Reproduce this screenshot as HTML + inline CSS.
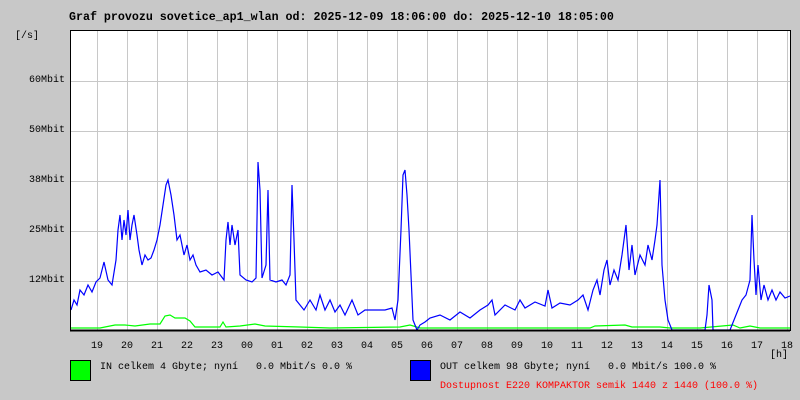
<!DOCTYPE html><html><head><style>
body{margin:0;width:800px;height:400px;background:#c8c8c8;font-family:"Liberation Mono",monospace;font-size:10px;color:#000;position:relative;overflow:hidden}
.t{position:absolute;white-space:pre}
.h{position:absolute;top:341px;width:20px;margin-left:-10px;text-align:center;font-size:10px}
</style></head><body>
<svg width="800" height="400" style="position:absolute;left:0;top:0">
<rect x="70" y="30" width="720" height="300" fill="#fff"/>
<g stroke="#c8c8c8" stroke-width="1">
<path d="M97.5 30V330M127.5 30V330M157.5 30V330M187.5 30V330M217.5 30V330M247.5 30V330M277.5 30V330M307.5 30V330M337.5 30V330M367.5 30V330M397.5 30V330M427.5 30V330M457.5 30V330M487.5 30V330M517.5 30V330M547.5 30V330M577.5 30V330M607.5 30V330M637.5 30V330M667.5 30V330M697.5 30V330M727.5 30V330M757.5 30V330M787.5 30V330"/>
<path d="M60 81.5H790M60 131.5H790M60 181.5H790M60 231.5H790M60 281.5H790"/>
</g>
<polyline fill="none" stroke="#00ff00" stroke-width="1.2" points="71,328 100,328 115,325 125,325 135,326 150,324 160,324 165,316 170,315 175,318 185,318 190,321 195,327 220,327 223,322 226,327 240,326 255,324 265,326 300,327 330,328 400,327 410,325 420,328 590,328 595,326 625,325 632,327 660,327 670,328 700,328 733,325 740,328 750,326 760,328 790,328"/>
<polyline fill="none" stroke="#0000ff" stroke-width="1.2" points="71,310 74,300 77,305 80,290 84,295 88,285 92,292 96,282 100,278 104,262 108,280 112,285 116,260 118,230 120,215 122,240 124,220 126,235 128,210 130,240 132,225 134,215 137,235 139,250 142,265 145,255 148,260 151,258 154,250 157,240 160,225 163,205 166,185 168,180 171,195 174,215 177,240 180,235 184,255 187,245 190,260 193,255 196,265 200,272 206,270 212,275 218,272 224,280 226,240 228,222 230,245 232,225 235,245 238,230 240,275 246,280 252,282 256,278 258,162 260,190 262,278 266,265 268,190 270,280 276,282 282,280 286,285 290,275 292,185 294,240 296,300 300,305 304,310 310,300 316,310 320,295 325,310 330,300 335,312 340,305 345,315 352,300 358,315 365,310 375,310 385,310 392,308 395,320 398,300 401,230 403,175 405,170 407,195 409,230 411,275 413,320 417,330 420,325 425,322 430,318 440,315 450,320 460,312 470,318 480,310 488,305 492,300 495,315 505,305 515,310 520,300 525,308 535,302 545,306 548,290 552,308 560,303 570,305 578,300 583,295 588,310 593,290 597,280 600,295 604,270 607,260 610,285 614,270 618,280 622,255 626,225 629,270 632,245 635,275 640,255 645,265 648,245 652,260 655,240 657,225 660,180 662,265 665,300 668,320 672,330 676,330 705,330 707,315 709,285 712,300 713,330 730,330 734,320 738,310 742,300 746,295 750,280 752,215 754,260 756,295 758,265 761,300 764,285 768,300 772,290 776,300 780,292 785,298 790,296"/>
<rect x="70.5" y="30.5" width="720" height="300" fill="none" stroke="#000" stroke-width="1"/>
<line x1="70" y1="330.5" x2="790" y2="330.5" stroke="#000" stroke-width="2"/>
<rect x="70.5" y="360.5" width="20" height="20" fill="#00ff00" stroke="#000"/>
<rect x="410.5" y="360.5" width="20" height="20" fill="#0000ff" stroke="#000"/>
</svg>
<div class="t" style="left:69px;top:11px;font-weight:bold;font-size:11.65px">Graf provozu sovetice_ap1_wlan od: 2025-12-09 18:06:00 do: 2025-12-10 18:05:00</div>
<div class="t" style="left:15px;top:31px">[/s]</div>
<div class="t" style="left:29px;top:75px">60Mbit</div>
<div class="t" style="left:29px;top:125px">50Mbit</div>
<div class="t" style="left:29px;top:175px">38Mbit</div>
<div class="t" style="left:29px;top:225px">25Mbit</div>
<div class="t" style="left:29px;top:275px">12Mbit</div>
<div class="h" style="left:97px">19</div><div class="h" style="left:127px">20</div><div class="h" style="left:157px">21</div><div class="h" style="left:187px">22</div><div class="h" style="left:217px">23</div><div class="h" style="left:247px">00</div><div class="h" style="left:277px">01</div><div class="h" style="left:307px">02</div><div class="h" style="left:337px">03</div><div class="h" style="left:367px">04</div><div class="h" style="left:397px">05</div><div class="h" style="left:427px">06</div><div class="h" style="left:457px">07</div><div class="h" style="left:487px">08</div><div class="h" style="left:517px">09</div><div class="h" style="left:547px">10</div><div class="h" style="left:577px">11</div><div class="h" style="left:607px">12</div><div class="h" style="left:637px">13</div><div class="h" style="left:667px">14</div><div class="h" style="left:697px">15</div><div class="h" style="left:727px">16</div><div class="h" style="left:757px">17</div><div class="h" style="left:787px">18</div>
<div class="t" style="left:770px;top:350px">[h]</div>
<div class="t" style="left:100px;top:362px">IN celkem 4 Gbyte; nyní   0.0 Mbit/s 0.0 %</div>
<div class="t" style="left:440px;top:362px">OUT celkem 98 Gbyte; nyní   0.0 Mbit/s 100.0 %</div>
<div class="t" style="left:440px;top:381px;color:#ff0000">Dostupnost E220 KOMPAKTOR semik 1440 z 1440 (100.0 %)</div>
</body></html>
